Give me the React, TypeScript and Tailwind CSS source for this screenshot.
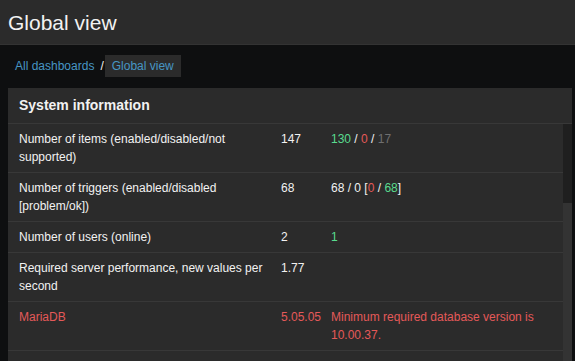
import React from 'react';

const green = 'text-[#59db8f]';
const red = 'text-[#e45959]';

const rows: { label: string; value: string; info: React.ReactNode; alert?: boolean }[] = [
  {
    label: 'Number of items (enabled/disabled/not supported)',
    value: '147',
    info: (
      <>
        <span className={green}>130</span> / <span className={red}>0</span> /{' '}
        <span className="text-[#6f6f6f]">17</span>
      </>
    ),
  },
  {
    label: 'Number of triggers (enabled/disabled [problem/ok])',
    value: '68',
    info: (
      <>
        68 / 0 [<span className={red}>0</span> / <span className={green}>68</span>]
      </>
    ),
  },
  {
    label: 'Number of users (online)',
    value: '2',
    info: <span className={green}>1</span>,
  },
  {
    label: 'Required server performance, new values per second',
    value: '1.77',
    info: '',
  },
  {
    label: 'MariaDB',
    value: '5.05.05',
    info: 'Minimum required database version is 10.00.37.',
    alert: true,
  },
];

const App: React.FC = () => {
  return (
    <div
      className="h-[361px] overflow-hidden bg-[#0e0f10] text-[#f2f2f2]"
      style={{ fontFamily: '"Liberation Sans", Arial, sans-serif' }}
    >
      {/* Page title */}
      <div className="h-[45px] bg-[#2b2b2b] border-b border-[#333] flex items-center px-2">
        <h1 className="text-[21px] leading-none">Global view</h1>
      </div>

      {/* Breadcrumbs */}
      <div className="flex items-center h-[22px] mt-[10px] mb-[11px] pl-[15px] text-[12px]">
        <a className="text-[#4796c4]">All dashboards</a>
        <span className="ml-[6px] mr-[1px]">/</span>
        <span className="bg-[#2b2b2b] text-[#4796c4] h-[22px] px-[7px] flex items-center">Global view</span>
      </div>

      {/* Widget */}
      <div className="ml-2 mr-[3px] bg-[#2b2b2b]">
        <div className="h-[36px] flex items-center px-[11px] border-b border-[#383838]">
          <h2 className="text-[14px] font-bold">System information</h2>
        </div>
        <div className="flex">
          <div className="flex-1">
            <table className="w-full text-[12px] leading-[18px]">
              <tbody>
                {rows.map((row, index) => (
                  <tr key={index} className={`border-b border-[#383838] align-top ${row.alert ? red : ''}`}>
                    <td className="pl-[11px] pr-2 py-[6px] w-[273px]">{row.label}</td>
                    <td className="py-[6px] w-[50px]">{row.value}</td>
                    <td className="py-[6px] pr-4">{row.info}</td>
                  </tr>
                ))}
                <tr>
                  <td colSpan={3} className="h-[31px]"></td>
                </tr>
              </tbody>
            </table>
          </div>
          {/* scrollbar */}
          <div className="w-[9px] bg-[#333333]">
            <div className="h-[79px] bg-[#1f1f1f]"></div>
          </div>
        </div>
      </div>
    </div>
  );
};

export default App;
